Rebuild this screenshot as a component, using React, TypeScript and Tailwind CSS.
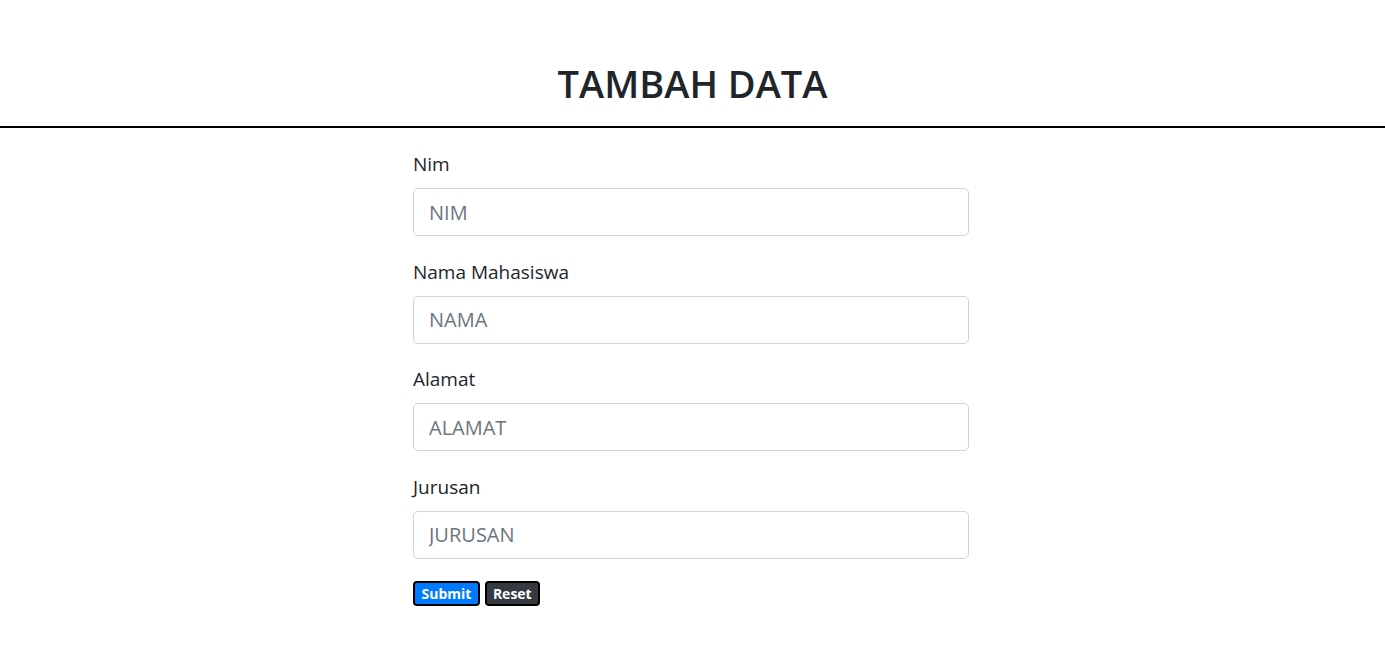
import React from "react";

const fields = [
  { label: "Nim", ph: "NIM" },
  { label: "Nama Mahasiswa", ph: "NAMA" },
  { label: "Alamat", ph: "ALAMAT" },
  { label: "Jurusan", ph: "JURUSAN" },
];

export default function App() {
  return (
    <div className="min-h-[651px] bg-white text-[#212529]" style={{ fontFamily: '"Open Sans", "Noto Sans", sans-serif' }}>
      <h1 className="pt-[58px] pb-[18px] text-center text-[38px] font-semibold leading-[50px]">TAMBAH DATA</h1>
      <div className="h-[2px] bg-black" />
      <form className="ml-[413px] w-[556px] pt-[23px]">
        {fields.map((f) => (
          <div key={f.label} className="mb-[22.5px]">
            <label className="mb-[11px] block text-[19px] leading-[26px]">{f.label}</label>
            <input
              placeholder={f.ph}
              className="block h-[48px] w-full rounded-[5px] border border-[#ced4da] px-[15px] text-[20px] placeholder:text-[#6c757d] outline-none"
            />
          </div>
        ))}
        <div className="mt-[3.5px] flex gap-[5px]">
          <button type="button" className="h-[25px] rounded-[4px] border-2 border-black bg-[#007bff] px-[6.5px] text-[14px] font-bold leading-none text-white">Submit</button>
          <button type="button" className="h-[25px] rounded-[4px] border-2 border-black bg-[#343a40] px-[6px] text-[14px] font-bold leading-none text-white">Reset</button>
        </div>
      </form>
    </div>
  );
}
